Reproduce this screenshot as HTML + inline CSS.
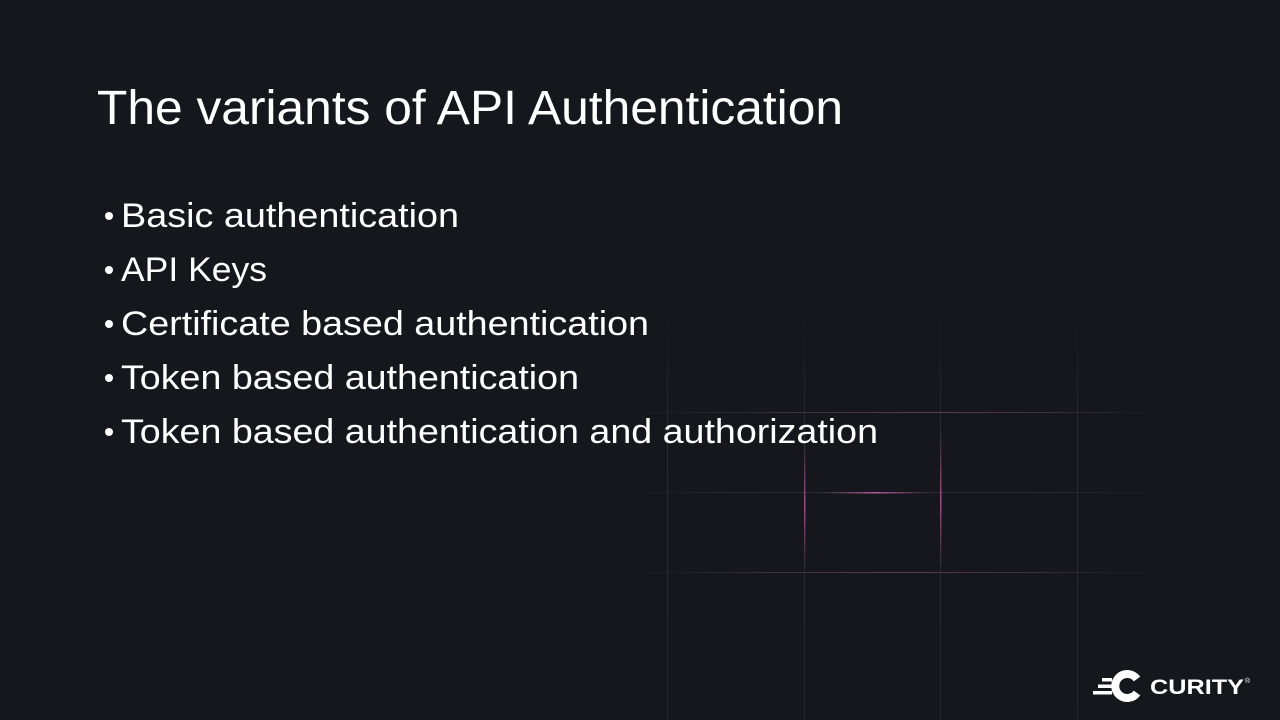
<!DOCTYPE html>
<html><head><meta charset="utf-8"><style>
html,body{margin:0;padding:0;background:#16171c;}
svg{display:block}
</style></head><body>
<svg width="1280" height="720" viewBox="0 0 1280 720" xmlns="http://www.w3.org/2000/svg">
<defs>
<linearGradient id="hv" x1="0" y1="0" x2="1" y2="0">
<stop offset="0" stop-color="#2a2a33" stop-opacity="0"/>
<stop offset="0.3" stop-color="#2c2b35"/>
<stop offset="0.7" stop-color="#2c2b35"/>
<stop offset="1" stop-color="#2a2a33" stop-opacity="0"/>
</linearGradient>
<linearGradient id="vv" x1="0" y1="0" x2="0" y2="1">
<stop offset="0" stop-color="#2a2a33" stop-opacity="0"/>
<stop offset="0.3" stop-color="#2a2a33"/>
<stop offset="1" stop-color="#25252d"/>
</linearGradient>
<linearGradient id="pv" x1="0" y1="0" x2="0" y2="1">
<stop offset="0" stop-color="#8a4a78" stop-opacity="0"/>
<stop offset="0.5" stop-color="#9a4f86"/>
<stop offset="1" stop-color="#8a4a78" stop-opacity="0"/>
</linearGradient>
<linearGradient id="ph" x1="0" y1="0" x2="1" y2="0">
<stop offset="0" stop-color="#a0508a" stop-opacity="0"/>
<stop offset="0.5" stop-color="#b05898"/>
<stop offset="1" stop-color="#a0508a" stop-opacity="0"/>
</linearGradient>
<linearGradient id="ph2" x1="0" y1="0" x2="1" y2="0">
<stop offset="0" stop-color="#5a3550" stop-opacity="0"/>
<stop offset="0.5" stop-color="#5e3a56"/>
<stop offset="1" stop-color="#5a3550" stop-opacity="0"/>
</linearGradient>
</defs>
<rect width="1280" height="720" fill="#16171c"/>
<rect x="667" y="310" width="1" height="410" fill="url(#vv)"/>
<rect x="804" y="310" width="1" height="410" fill="url(#vv)"/>
<rect x="940" y="310" width="1" height="410" fill="url(#vv)"/>
<rect x="1077" y="310" width="1" height="410" fill="url(#vv)"/>
<rect x="600" y="412" width="590" height="1" fill="url(#hv)"/>
<rect x="600" y="492" width="590" height="1" fill="url(#hv)"/>
<rect x="600" y="572" width="590" height="1" fill="url(#hv)"/>
<rect x="700" y="572" width="400" height="1" fill="url(#ph2)"/>
<rect x="730" y="412" width="400" height="1" fill="url(#ph2)"/>
<rect x="804" y="440" width="1.5" height="130" fill="url(#pv)"/>
<rect x="940" y="430" width="1.5" height="140" fill="url(#pv)"/>
<rect x="820" y="492" width="110" height="1.5" fill="url(#ph)"/>
<g fill="#ffffff" font-family="'Liberation Sans', sans-serif">
<text x="97" y="124" font-size="48" textLength="746" lengthAdjust="spacingAndGlyphs">The variants of API Authentication</text>
<g font-size="34">
<circle cx="109" cy="216" r="4"/>
<text x="121" y="227" textLength="338" lengthAdjust="spacingAndGlyphs">Basic authentication</text>
<circle cx="109" cy="270" r="4"/>
<text x="121" y="281" textLength="146" lengthAdjust="spacingAndGlyphs">API Keys</text>
<circle cx="109" cy="324" r="4"/>
<text x="121" y="335" textLength="528" lengthAdjust="spacingAndGlyphs">Certificate based authentication</text>
<circle cx="109" cy="378" r="4"/>
<text x="121" y="389" textLength="458" lengthAdjust="spacingAndGlyphs">Token based authentication</text>
<circle cx="109" cy="432" r="4"/>
<text x="121" y="443" textLength="757" lengthAdjust="spacingAndGlyphs">Token based authentication and authorization</text>
</g>
<rect x="1102" y="678" width="10" height="3.5"/>
<rect x="1098" y="684.5" width="14" height="3.5"/>
<rect x="1093" y="691" width="19" height="3.5"/>
<path d="M1137 679 A12 12 0 1 0 1137 693" fill="none" stroke="#fff" stroke-width="8"/>
<text x="1150" y="694" font-size="21" font-weight="bold" textLength="94" lengthAdjust="spacingAndGlyphs">CURITY</text>
<text x="1245" y="683" font-size="7">®</text>
</g>
</svg>
</body></html>
